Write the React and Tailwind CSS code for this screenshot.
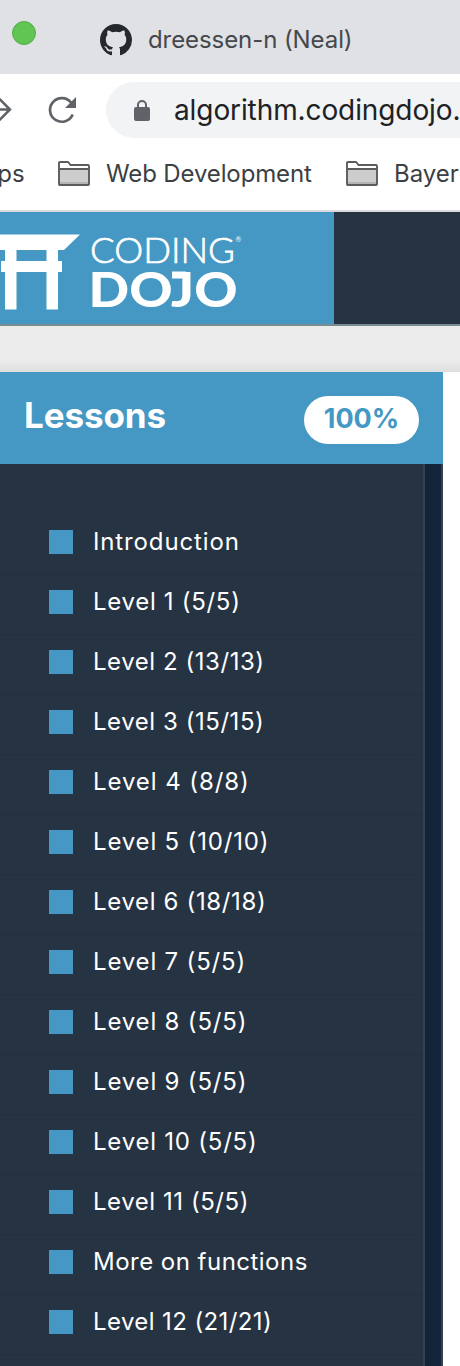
const lessons = [
  { title: "Introduction", spacing: "tracking-[0.87px]" },
  { title: "Level 1 (5/5)", spacing: "tracking-[0.7px]" },
  { title: "Level 2 (13/13)", spacing: "tracking-[0.55px]" },
  { title: "Level 3 (15/15)", spacing: "tracking-[0.55px]" },
  { title: "Level 4 (8/8)", spacing: "tracking-[0.92px]" },
  { title: "Level 5 (10/10)", spacing: "tracking-[0.82px]" },
  { title: "Level 6 (18/18)", spacing: "tracking-[0.65px]" },
  { title: "Level 7 (5/5)", spacing: "tracking-[0.82px]" },
  { title: "Level 8 (5/5)", spacing: "tracking-[0.82px]" },
  { title: "Level 9 (5/5)", spacing: "tracking-[0.82px]" },
  { title: "Level 10 (5/5)", spacing: "tracking-[0.77px]" },
  { title: "Level 11 (5/5)", spacing: "tracking-[0.55px]" },
  { title: "More on functions", spacing: "tracking-[0.48px]" },
  { title: "Level 12 (21/21)", spacing: "tracking-[0.4px]" },
];

function GithubMark() {
  return (
    <svg width="32" height="32" viewBox="0 0 16 16" fill="#24292e" className="mt-6 ml-16 shrink-0">
      <path d="M8 0C3.58 0 0 3.58 0 8c0 3.54 2.29 6.53 5.47 7.59.4.07.55-.17.55-.38 0-.19-.01-.82-.01-1.49-2.01.37-2.53-.49-2.69-.94-.09-.23-.48-.94-.82-1.13-.28-.15-.68-.52-.01-.53.63-.01 1.08.58 1.23.82.72 1.21 1.87.87 2.33.66.07-.52.28-.87.51-1.07-1.78-.2-3.64-.89-3.64-3.95 0-.87.31-1.59.82-2.15-.08-.2-.36-1.02.08-2.12 0 0 .67-.21 2.2.82.64-.18 1.32-.27 2-.27s1.36.09 2 .27c1.53-1.04 2.2-.82 2.2-.82.44 1.1.16 1.92.08 2.12.51.56.82 1.27.82 2.15 0 3.07-1.87 3.75-3.65 3.95.29.25.54.73.54 1.48 0 1.07-.01 1.93-.01 2.2 0 .21.15.46.55.38A8.01 8.01 0 0 0 16 8c0-4.42-3.58-8-8-8Z" />
    </svg>
  );
}

function Folder() {
  return (
    <svg width="32" height="25" viewBox="0 0 32 25" className="shrink-0">
      <path d="M1 23V2Q1 1 2 1H9.5Q10.300 1 10.800 1.700L12.500 4H30Q31 4 31 5V23Q31 24 30 24H2Q1 24 1 23Z" fill="#fff" />
      <path d="M1 8H31V24H1Z" fill="#cdcdcd" />
      <path d="M1 21H31V24H1Z" fill="#b4b4b4" />
      <path d="M1 8H31M1 23V2Q1 1 2 1H9.500Q10.300 1 10.800 1.700L12.500 4H30Q31 4 31 5V23Q31 24 30 24H2Q1 24 1 23Z" fill="none" stroke="#5c5c5c" strokeWidth="1.9" />
    </svg>
  );
}

function Logo() {
  return (
    <svg width="334" height="112" viewBox="0 0 334 112" fill="#fff" className="block" fontFamily="Lato, sans-serif">
      <path d="M0 22.500H80L64 38H58V49H62V60H58V97.500H46.500V60H16.500V97.500H5V60H1V49H5V38H0ZM16.500 38V49H46.500V38Z" fillRule="evenodd" />
      <text x="90" y="50.500" fontSize="36" fontWeight="300" stroke="#fff" strokeWidth="0.7" textLength="145" lengthAdjust="spacingAndGlyphs">CODING</text>
      <text x="88.500" y="94.500" fontSize="48" fontWeight="900" textLength="149" lengthAdjust="spacingAndGlyphs">DOJO</text>
      <path d="M172 59.500H186V66.500H172Z" />
      <text x="235.500" y="30" fontSize="7">®</text>
    </svg>
  );
}

export default function App() {
  return (
    <div className="flex h-[1366px] w-[460px] flex-col overflow-hidden bg-white font-['Inter',sans-serif]">
      <header className="shrink-0 whitespace-nowrap">
        <div className="flex h-[74px] bg-[#dfe1e5] pl-3">
          <div className="mt-[21px] size-6 rounded-full border border-[#56ad49] bg-[#61c554]" />
          <GithubMark />
          <div className="mt-[22px] ml-4 text-[24px] leading-9 tracking-[-0.08px] text-[#45484c]">dreessen-n (Neal)</div>
        </div>
        <div className="flex h-[72px] pt-2">
          <svg width="106" height="56" viewBox="0 0 106 56" fill="none" stroke="#5f6368" strokeWidth="2.5" className="shrink-0">
            <path d="M-8 27.500H9M-1 16.500L10 27.500L-1 38.500" />
            <path d="M71 20.500A11.800 11.800 0 1 0 72.700 32.500" strokeWidth="2.700" />
            <path d="M76 15V26H65Z" fill="#5f6368" stroke="none" />
          </svg>
          <div className="flex h-14 flex-1 items-center rounded-l-full bg-[#f1f3f4] pl-7">
            <svg width="16" height="22" viewBox="0 0 16 22" className="mt-0.5 shrink-0">
              <rect y="7" width="16" height="14" rx="2" fill="#5f6368" />
              <path d="M4 8V5A4 4 0 0 1 12 5V8" fill="none" stroke="#5f6368" strokeWidth="2" />
            </svg>
            <div className="ml-6 text-[28px] leading-9 tracking-[-0.1px] text-[#202124]">algorithm.codingdojo.com</div>
          </div>
        </div>
        <div className="flex h-16 items-start pt-[15px] text-[24px] leading-7 text-[#3c4043]">
          <div className="-mt-px flex w-[58px] shrink-0"><div className="-ml-[34px]">Apps</div></div>
          <Folder />
          <div className="-mt-px ml-4 w-60 shrink-0 tracking-[-0.13px]">Web Development</div>
          <Folder />
          <div className="-mt-px ml-4 shrink-0">Bayer</div>
        </div>
      </header>
      <div className="h-[116px] shrink-0 border-t-2 border-b-2 border-t-[#d8dadd] border-b-[#778d8f] bg-[#263343]">
        <div className="h-[112px] w-[334px] bg-[#4598c4]"><Logo /></div>
      </div>
      <div className="h-[46px] shrink-0 bg-linear-to-b from-[#ececec] from-75% to-[#dedede]" />
      <main className="flex w-[443px] flex-1 flex-col bg-[#263343]">
        <div className="flex h-[92px] shrink-0 items-start justify-between bg-[#4598c4] pr-6 pl-6">
          <h1 className="mt-5 text-[35px] leading-[46px] font-bold tracking-[-0.1px] text-white">Lessons</h1>
          <div className="mt-6 flex h-12 w-[115px] items-center justify-center rounded-full bg-white pb-px text-[27px] font-bold text-[#4598c4]">100%</div>
        </div>
        <div className="flex min-h-0 flex-1">
          <ul className="w-[423px] pt-[52px]">
            {lessons.map(({ title, spacing }) => (
              <li key={title} className="flex h-[60px] items-center border-b-2 border-[#243141] pb-1.5 pl-[49px]">
                <span className="size-6 bg-[#4598c4]" />
                <span className={`ml-5 text-[24px] leading-7 whitespace-nowrap text-white ${spacing}`}>{title}</span>
              </li>
            ))}
          </ul>
          <div className="w-5 border-r-2 border-l-2 border-[#34424f] bg-[#132339]" />
        </div>
      </main>
    </div>
  );
}
